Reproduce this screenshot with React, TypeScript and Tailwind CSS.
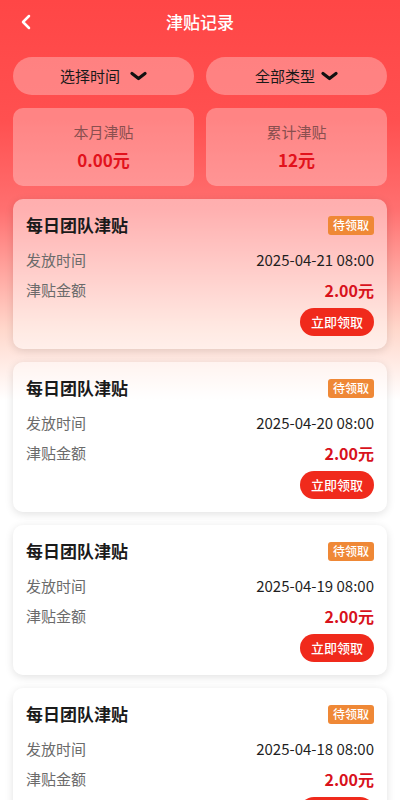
import { ChevronLeft } from "lucide-react";

type Record = { date: string; amount: string };

const records: Record[] = [
  { date: "2025-04-21 08:00", amount: "2.00元" },
  { date: "2025-04-20 08:00", amount: "2.00元" },
  { date: "2025-04-19 08:00", amount: "2.00元" },
  { date: "2025-04-18 08:00", amount: "2.00元" },
];

function Caret() {
  return (
    <svg width="17" height="10" viewBox="0 0 17 10" fill="none" aria-hidden="true">
      <path d="M2 2.5 L8.5 7.5 L15 2.5" stroke="#111" strokeWidth="3.2" strokeLinecap="round" strokeLinejoin="round" />
    </svg>
  );
}

function FilterPill({ label, gap }: { label: string; gap: string }) {
  return (
    <button className={`flex h-[38px] flex-1 items-center justify-center ${gap} rounded-full bg-white/30 text-[15px] text-[#1a1a1a]`}>
      <span>{label}</span>
      <Caret />
    </button>
  );
}

function StatCard({ label, value }: { label: string; value: string }) {
  return (
    <div className="flex h-[78px] flex-1 flex-col items-center justify-center gap-[6px] rounded-[10px] bg-white/30">
      <p className="text-[15px] leading-5 text-[#8a4f4f]">{label}</p>
      <p className="text-[17px] font-bold leading-6 text-[#e2121c]">{value}</p>
    </div>
  );
}

function RecordCard({ record }: { record: Record }) {
  return (
    <div className="flex h-[150px] flex-col rounded-[10px] bg-white/45 px-[13px] pt-4 pb-[13px] shadow-[0_2px_8px_rgba(0,0,0,0.12)]">
      <div className="flex h-5 items-center justify-between">
        <h3 className="text-[17px] font-bold text-[#1a1a1a]">每日团队津贴</h3>
        <span className="flex h-[19px] items-center rounded-[3px] bg-[#ef8836] px-[5px] text-[12px] font-medium text-white">
          待领取
        </span>
      </div>
      <div className="mt-[14px] flex h-[22px] items-center justify-between text-[15px]">
        <span className="text-[#6b6b6b]">发放时间</span>
        <span className="text-[#1f1f1f]">{record.date}</span>
      </div>
      <div className="mt-2 flex h-[22px] items-center justify-between text-[15px]">
        <span className="text-[#6b6b6b]">津贴金额</span>
        <span className="text-[16px] font-bold text-[#d8121c]">{record.amount}</span>
      </div>
      <div className="mt-auto flex justify-end">
        <button className="flex h-[28px] w-[74px] items-center justify-center rounded-full bg-[#f02a1c] text-[13px] font-medium text-white">
          立即领取
        </button>
      </div>
    </div>
  );
}

export default function App() {
  return (
    <div className="min-h-screen bg-white bg-[linear-gradient(180deg,#ff4646_0px,#ff5050_120px,#ff7070_210px,#ffd8cc_330px,#ffffff_400px)] font-['Noto_Sans_CJK_SC','Noto_Sans',sans-serif]">
      <header className="relative flex h-[44px] items-center justify-center">
        <ChevronLeft className="absolute left-[14px] top-[10px] h-6 w-6 text-white" strokeWidth={2.5} />
        <h1 className="text-[17px] font-medium text-white">津贴记录</h1>
      </header>

      <div className="px-[13px] pt-[13px]">
        <div className="flex gap-3">
          <FilterPill label="选择时间" gap="gap-[10px]" />
          <FilterPill label="全部类型" gap="gap-[6px]" />
        </div>

        <div className="mt-[13px] flex gap-3">
          <StatCard label="本月津贴" value="0.00元" />
          <StatCard label="累计津贴" value="12元" />
        </div>

        <div className="mt-[13px] flex flex-col gap-[13px] pb-6">
          {records.map((r) => (
            <RecordCard key={r.date} record={r} />
          ))}
        </div>
      </div>
    </div>
  );
}
